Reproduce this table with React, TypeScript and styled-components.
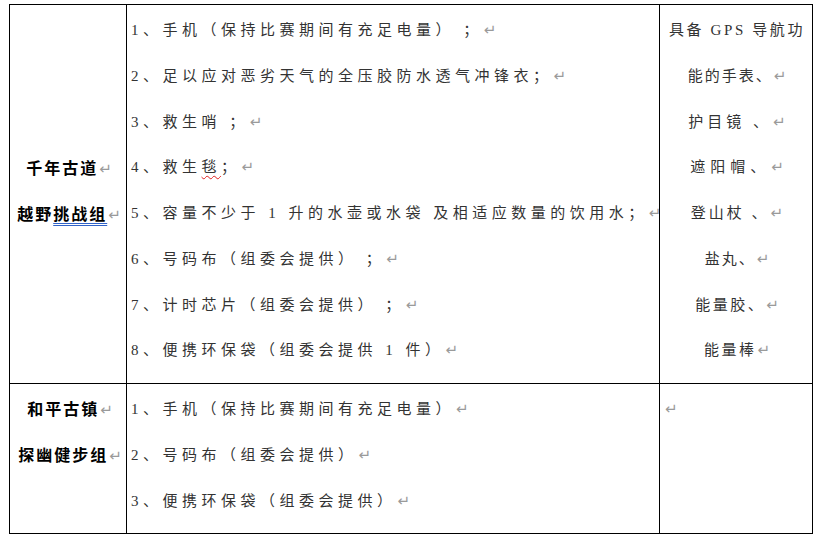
import React from "react";
import styled, { createGlobalStyle } from "styled-components";

const GlobalStyle = createGlobalStyle`
  html, body {
    margin: 0;
    padding: 0;
    background: #ffffff;
  }
`;

const Page = styled.div`
  padding: 4px 0 0 9px;
  font-family: "Liberation Serif", "Noto Sans CJK SC", serif;
  color: #333333;
`;

const Table = styled.div`
  display: grid;
  grid-template-columns: 117px 533px 153px;
  grid-template-rows: 379px 150px;
  width: fit-content;
  border-left: 1px solid #000;
  border-top: 1px solid #000;
`;

const Cell = styled.div<{ $center?: boolean; $middle?: boolean; $pad: string }>`
  box-sizing: border-box;
  border-right: 1px solid #000;
  border-bottom: 1px solid #000;
  display: flex;
  flex-direction: column;
  align-items: ${(p) => (p.$center ? "center" : "flex-start")};
  justify-content: ${(p) => (p.$middle ? "center" : "flex-start")};
  padding: ${(p) => p.$pad};
  overflow: hidden;
`;

const Line = styled.div<{ $ls?: number }>`
  height: 45.75px;
  line-height: 45.75px;
  font-size: 15px;
  letter-spacing: ${(p) => p.$ls ?? 4.5}px;
  white-space: nowrap;
`;

const GroupLine = styled.div`
  height: 45.75px;
  line-height: 45.75px;
  font-size: 16px;
  font-weight: 700;
  letter-spacing: 2px;
  color: #000;
  white-space: nowrap;
`;

const Mark = styled.span`
  font-family: "DejaVu Sans", sans-serif;
  font-size: 15px;
  font-weight: 400;
  letter-spacing: 0;
  color: #9a9a9a;
  margin-left: 1px;
`;

const Squiggle = styled.span`
  text-decoration: underline wavy #e02020;
  text-decoration-thickness: 1px;
  text-underline-offset: 3px;
  text-decoration-skip-ink: none;
`;

const DoubleUnder = styled.span`
  text-decoration: underline double #2f62c8;
  text-decoration-thickness: 1px;
  text-underline-offset: 3px;
  text-decoration-skip-ink: none;
`;

const Ret = () => <Mark>↵</Mark>;

const race1Items: React.ReactNode[] = [
  "1、手机（保持比赛期间有充足电量） ；",
  "2、足以应对恶劣天气的全压胶防水透气冲锋衣；",
  "3、救生哨 ；",
  <>
    4、救生<Squiggle>毯</Squiggle>；
  </>,
  "5、容量不少于 1 升的水壶或水袋 及相适应数量的饮用水；",
  "6、号码布（组委会提供） ；",
  "7、计时芯片（组委会提供） ；",
  "8、便携环保袋（组委会提供 1 件）",
];

const race2Items = [
  "1、手机（保持比赛期间有充足电量）",
  "2、号码布（组委会提供）",
  "3、便携环保袋（组委会提供）",
];

const extras: { text: string; ls: number; mark: boolean }[] = [
  { text: "具备 GPS 导航功", ls: 2.6, mark: false },
  { text: "能的手表、", ls: 2, mark: true },
  { text: "护目镜 、", ls: 4, mark: true },
  { text: "遮阳帽、", ls: 5, mark: true },
  { text: "登山杖 、", ls: 3, mark: true },
  { text: "盐丸、", ls: 2, mark: true },
  { text: "能量胶、", ls: 2.5, mark: true },
  { text: "能量棒", ls: 2.5, mark: true },
];

export default function App() {
  return (
    <>
      <GlobalStyle />
      <Page>
        <Table>
          <Cell $center $middle $pad="0 2px 5px 4px">
            <GroupLine>
              千年古道
              <Ret />
            </GroupLine>
            <GroupLine>
              越野<DoubleUnder>挑战组</DoubleUnder>
              <Ret />
            </GroupLine>
          </Cell>
          <Cell $pad="3px 0 0 4px">
            {race1Items.map((item, i) => (
              <Line key={i}>
                {item}
                <Ret />
              </Line>
            ))}
          </Cell>
          <Cell $center $pad="3px 0 0 2px">
            {extras.map((e, i) => (
              <Line key={i} $ls={e.ls}>
                {e.text}
                {e.mark && <Ret />}
              </Line>
            ))}
          </Cell>
          <Cell $center $pad="3px 0 0 4px">
            <GroupLine>
              和平古镇
              <Ret />
            </GroupLine>
            <GroupLine>
              探幽健步组
              <Ret />
            </GroupLine>
          </Cell>
          <Cell $pad="3px 0 0 4px">
            {race2Items.map((item, i) => (
              <Line key={i}>
                {item}
                <Ret />
              </Line>
            ))}
          </Cell>
          <Cell $pad="3px 0 0 4px">
            <Line>
              <Ret />
            </Line>
          </Cell>
        </Table>
      </Page>
    </>
  );
}
